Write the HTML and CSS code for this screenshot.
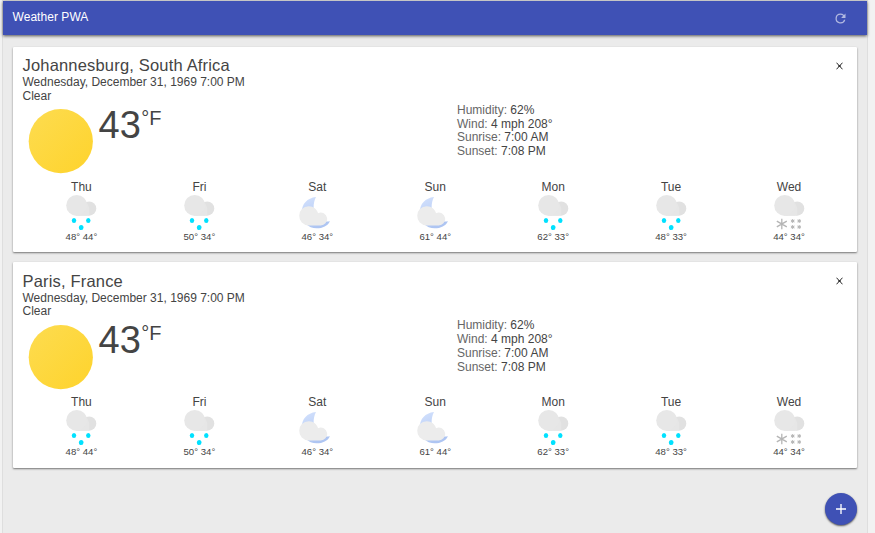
FILE: index.html
```html
<!DOCTYPE html>
<html lang="en">
<head>
<meta charset="utf-8">
<title>Weather PWA</title>
<link rel="stylesheet" href="styles.css">
</head>
<body>
<svg class="sprites" width="0" height="0">
  <defs>
    <linearGradient id="sunFill" x1="0" y1="0" x2="1" y2="1"><stop offset="0" stop-color="#fddc50"/><stop offset="1" stop-color="#fed32c"/></linearGradient>
    <linearGradient id="moonFill" x1="0" y1="0" x2="0.4" y2="1"><stop offset="0" stop-color="#d4e2fd"/><stop offset="1" stop-color="#aec5f2"/></linearGradient>
  </defs>
  <symbol id="cloud" viewBox="0 0 36 38">
    <circle cx="26" cy="15.6" r="7.1" fill="#e1e1e1"/>
    <path d="M13.5 12H24V22.8H13.5Z" fill="#e6e6e6"/>
    <circle cx="13.5" cy="12.4" r="10.5" fill="#e7e7e7"/>
    <path d="M20 20Q25 16 23.5 9L26 15V22.7H14Z" fill="#e6e6e6"/>
  </symbol>
  <symbol id="rain" viewBox="0 0 36 38">
    <use href="#cloud" width="36" height="38"/>
    <g fill="#00e1ff"><ellipse cx="10.8" cy="27.5" rx="2.2" ry="2.6"/><ellipse cx="25.1" cy="27.5" rx="2.2" ry="2.6"/><ellipse cx="18" cy="34.5" rx="2.3" ry="2.6"/></g>
  </symbol>
  <symbol id="snow" viewBox="0 0 36 38">
    <use href="#cloud" width="36" height="38"/>
    <g stroke="#b5b5b5" fill="none"><path stroke-width="1.3" d="M10.6 25.7V36.3M5.6 28.1L15.6 33.9M15.6 28.1L5.6 33.9"/>
    <path stroke-width="1" d="M21.5 26V30M19.7 27L23.3 29M23.3 27L19.7 29M28 26V30M26.2 27L29.8 29M29.8 27L26.2 29M21.5 32V36M19.7 33L23.3 35M23.3 33L19.7 35M28 32V36M26.2 33L29.8 35M29.8 33L26.2 35"/></g>
  </symbol>
  <symbol id="night" viewBox="0 0 36 38">
    <path d="M16.8 4C8 5 2.5 11 2.5 19.5C2.5 29 9 35.3 17.5 35.3C23.5 35.3 28.5 33 30.7 28.2C21 30 14.4 24 14.4 15C14.4 10.5 15.2 7 16.8 4Z" fill="url(#moonFill)"/>
    <path d="M9.5 13.3C14.5 13.3 17.6 16.3 18.9 20.2A6.4 6.4 0 1 1 21 32.4H9.3A9.5 9.5 0 0 1 9.5 13.3Z" fill="#ececec"/>
  </symbol>
</svg>
<div class="app">
  <header class="header">
    <h1 class="header-title">Weather PWA</h1>
    <button class="refresh" aria-label="Refresh"><svg width="15" height="15" viewBox="0 0 24 24"><path fill="currentColor" d="M17.65 6.35A7.96 7.96 0 0 0 12 4a8 8 0 1 0 7.73 10h-2.08A6 6 0 1 1 12 6c1.66 0 3.14.69 4.22 1.78L13 11h7V4z"/></svg></button>
  </header>
  <main class="main" id="cards"></main>
  <button class="add" aria-label="Add"><svg width="16" height="16" viewBox="0 0 24 24"><path fill="#fff" d="M19.5 13h-6.5v6.5h-2V13H4.5v-2h6.5V4.5h2V11h6.5z"/></svg></button>
</div>
<script src="app.js"></script>
</body>
</html>
```
FILE: styles.css
```css
* { box-sizing: border-box; }
body { margin: 0; height: 533px; overflow: hidden; background: #f2f2f2; color: #444; font-family: "Liberation Sans", Arial, sans-serif; font-size: 12px; }
button { border: 0; padding: 0; background: none; display: flex; align-items: center; justify-content: center; }
.sprites { position: absolute; }
.app { margin-left: 2px; width: 866px; height: 533px; border: 1px solid #dedede; border-bottom: 0; background: #ebebeb; }
.header { height: 34px; padding: 0 19px 0 9.5px; display: flex; align-items: center; justify-content: space-between; background: #3f51b5; color: #fff; box-shadow: 0 1px 3px rgba(0,0,0,.65); }
.header-title { margin: 0; font-size: 12px; font-weight: 400; letter-spacing: .05px; line-height: 32px; padding-bottom: 2px; }
.refresh { color: #b2b9e1; }
.main { padding: 11.8px 10px 0; }
.card { position: relative; height: 205.3px; margin-bottom: 10.2px; padding: 9.4px 9.5px 10px; background: #fff; border-radius: 1px; box-shadow: 0 1px 2px rgba(0,0,0,.5); }
.remove { position: absolute; top: 15px; right: 14px; }
.city { font-size: 16.5px; line-height: 18px; letter-spacing: .18px; height: 19px; }
.date, .description { line-height: 14px; height: 13.6px; }
.current { display: flex; height: 73.4px; }
.visual { display: flex; width: 434.5px; }
.sun { width: 76px; height: 76px; }
.temp { display: flex; align-items: flex-start; padding-top: .6px; }
.degrees { font-size: 38px; line-height: 44px; }
.scale { font-size: 20px; line-height: 30px; padding-left: .5px; }
.details { line-height: 13.8px; padding-top: 1.4px; color: #444; }
.label { color: #666; }
.future { display: grid; grid-template-columns: repeat(7, 1fr); text-align: center; padding-top: 4px; margin-right: -.5px; }
.day { line-height: 14px; }
.forecast { display: block; width: 36px; height: 38px; margin: -1px auto 0; transform: translateX(.2px); }
.range { font-size: 9.6px; line-height: 11px; }
.add { position: absolute; left: 825px; top: 493px; width: 32px; height: 32px; border-radius: 50%; background: #3f51b5; box-shadow: 0 1px 2px rgba(0,0,0,.65); }
```
FILE: app.js
```js
const days = [
  ["Thu", "rain", "48° 44°"], ["Fri", "rain", "50° 34°"],
  ["Sat", "night", "46° 34°"], ["Sun", "night", "61° 44°"],
  ["Mon", "rain", "62° 33°"], ["Tue", "rain", "48° 33°"],
  ["Wed", "snow", "44° 34°"]
];
const details = [["Humidity", "62%"], ["Wind", "4 mph 208°"], ["Sunrise", "7:00 AM"], ["Sunset", "7:08 PM"]];
const card = city => `<article class="card">
  <button class="remove" aria-label="Remove"><svg width="7" height="8" viewBox="0 0 7 8"><path d="M.5.7L6.5 7.3M6.5.7L.5 7.3M2 4H5" fill="none" stroke="#111" stroke-width=".9"/></svg></button>
  <div class="city">${city}</div>
  <div class="date">Wednesday, December 31, 1969 7:00 PM</div>
  <div class="description">Clear</div>
  <div class="current">
    <div class="visual">
      <svg class="sun" viewBox="0 0 76 76"><circle cx="37.8" cy="39.2" r="32.1" fill="url(#sunFill)"/></svg>
      <div class="temp"><span class="degrees">43</span><span class="scale">°F</span></div>
    </div>
    <div class="details">${details.map(([k, v]) => `<div><span class="label">${k}:</span> ${v}</div>`).join("")}</div>
  </div>
  <div class="future">${days.map(([d, icon, r]) => `<div><div class="day">${d}</div><svg class="forecast"><use href="#${icon}" width="36" height="38"/></svg><div class="range">${r}</div></div>`).join("")}</div>
</article>`;
document.getElementById("cards").innerHTML = ["Johannesburg, South Africa", "Paris, France"].map(card).join("");
```
